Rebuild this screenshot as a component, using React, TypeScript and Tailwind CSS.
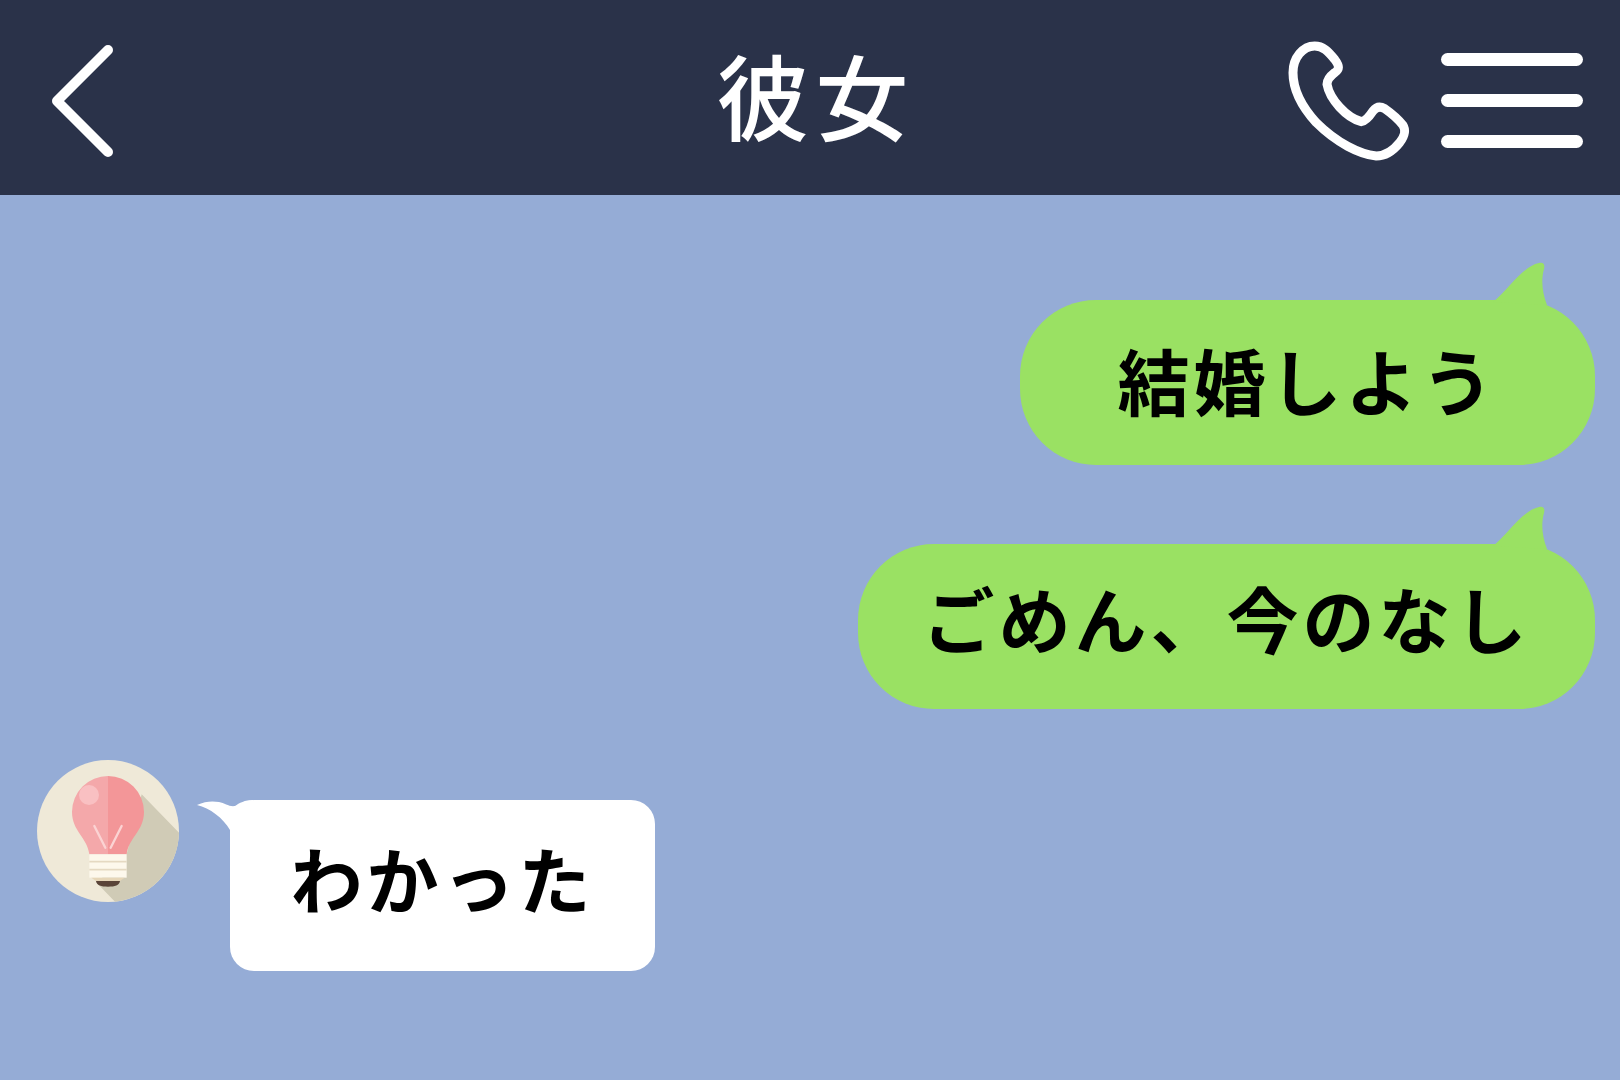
import React from 'react';

const FONT = "font-['Noto_Sans_CJK_JP','Noto_Sans_CJK_SC',sans-serif]";

// Ampoule de l'avatar
const BulbAvatar: React.FC = () => (
  <svg width="142" height="142" viewBox="111 62 426 426" className="shrink-0">
    <circle cx="324" cy="275" r="213" fill="#efe9d8" />
    <path d="M425 165 L537 280 A213 213 0 0 1 345 487 L290 430 L380 345 Z" fill="#d0cbb6" />
    <path d="M324 110 A108 108 0 0 0 216 218 C216 275 262 295 268 345 L324 345 Z" fill="#f4a8aa" />
    <path d="M324 110 A108 108 0 0 1 432 218 C432 275 386 295 380 345 L324 345 Z" fill="#f39698" />
    <circle cx="267" cy="167" r="30" fill="#f9c0c2" />
    <path d="M283 260 L316 325 M365 260 L332 325" stroke="#fbd3d3" strokeWidth="7" strokeLinecap="round" />
    <rect x="268" y="345" width="112" height="70" fill="#fdf8ec" />
    <path d="M268 367 H380 M268 391 H380" stroke="#e5d9c2" strokeWidth="5" />
    <path d="M274 415 H374 L360 425 H288 Z" fill="#e6d6b8" />
    <path d="M288 425 H360 C358 438 345 442 324 442 C303 442 290 438 288 425 Z" fill="#5a4438" />
  </svg>
);

const GreenBubble: React.FC<{ text: string; className: string }> = ({ text, className }) => (
  <div className={`relative flex h-[165px] items-center justify-center rounded-[76px] bg-[#9ae163] ${className}`}>
    <svg width="60" height="45" viewBox="0 0 60 45" className="absolute -top-10 right-[45px]">
      <path d="M3 42 C18 30 33 6 49 3 C54 2 55 5 54 9 C51 20 52 32 57 45 Z" fill="#9ae163" />
    </svg>
    <span className="text-[72px] font-bold leading-none tracking-[4px] text-black">{text}</span>
  </div>
);

export default function App() {
  return (
    <div className={`flex h-screen w-full flex-col overflow-hidden bg-[#95acd6] ${FONT}`}>
      {/* Header */}
      <header className="flex h-[195px] shrink-0 items-center bg-[#2a3249] pt-[6px] pl-[52px] pr-[37px]">
        <div className="flex flex-1 items-center">
          <svg width="62" height="114" viewBox="52 43 62 114" fill="none" stroke="#fff" strokeWidth="10" strokeLinecap="round" strokeLinejoin="round">
            <path d="M108 49 L57 100 L108 151" />
          </svg>
        </div>
        <h1 className="mb-[14px] mr-[4px] text-[93px] font-medium leading-none tracking-[6px] text-white">彼女</h1>
        <div className="flex flex-1 items-center justify-end gap-8">
          <svg width="120" height="118" viewBox="88 68 360 354" fill="none" stroke="#fff" strokeWidth="27" strokeLinejoin="round" className="overflow-visible">
            <path d="M165 80 C190 80 205 95 225 120 C240 140 240 150 225 160 C212 170 202 180 202 195 C210 240 260 295 305 307 C318 305 330 290 340 275 C350 262 362 260 375 268 C395 282 420 305 430 318 C440 335 435 350 420 370 C400 395 375 410 350 410 C300 405 230 370 170 310 C120 255 100 205 100 160 C100 115 130 80 165 80 Z" />
          </svg>
          <div className="flex w-[142px] flex-col gap-[28px]">
            <div className="h-[13px] rounded-full bg-white" />
            <div className="h-[13px] rounded-full bg-white" />
            <div className="h-[13px] rounded-full bg-white" />
          </div>
        </div>
      </header>

      {/* Messages */}
      <main className="flex flex-1 flex-col pt-[105px] pl-[37px] pr-[25px]">
        <div className="flex flex-col items-end gap-[79px]">
          <GreenBubble text="結婚しよう" className="w-[575px] pb-[8px]" />
          <GreenBubble text="ごめん、今のなし" className="w-[737px] pb-[20px]" />
        </div>
        <div className="mt-[51px] flex items-start gap-[51px]">
          <BulbAvatar />
          <div className="relative mt-[40px] flex h-[171px] w-[425px] items-center justify-center rounded-[24px] bg-white pb-[18px]">
            <svg width="60" height="32" viewBox="0 0 60 32" className="absolute -left-[35px] -top-[2px]">
              <path d="M2 7 C10 3 18 3 24 4 C30 5 34 9 40 8 C44 5 50 2 58 2 V32 H35 C28 20 15 10 2 7 Z" fill="#fff" />
            </svg>
            <span className="text-[72px] font-bold leading-none tracking-[4px] text-black">わかった</span>
          </div>
        </div>
      </main>
    </div>
  );
}
